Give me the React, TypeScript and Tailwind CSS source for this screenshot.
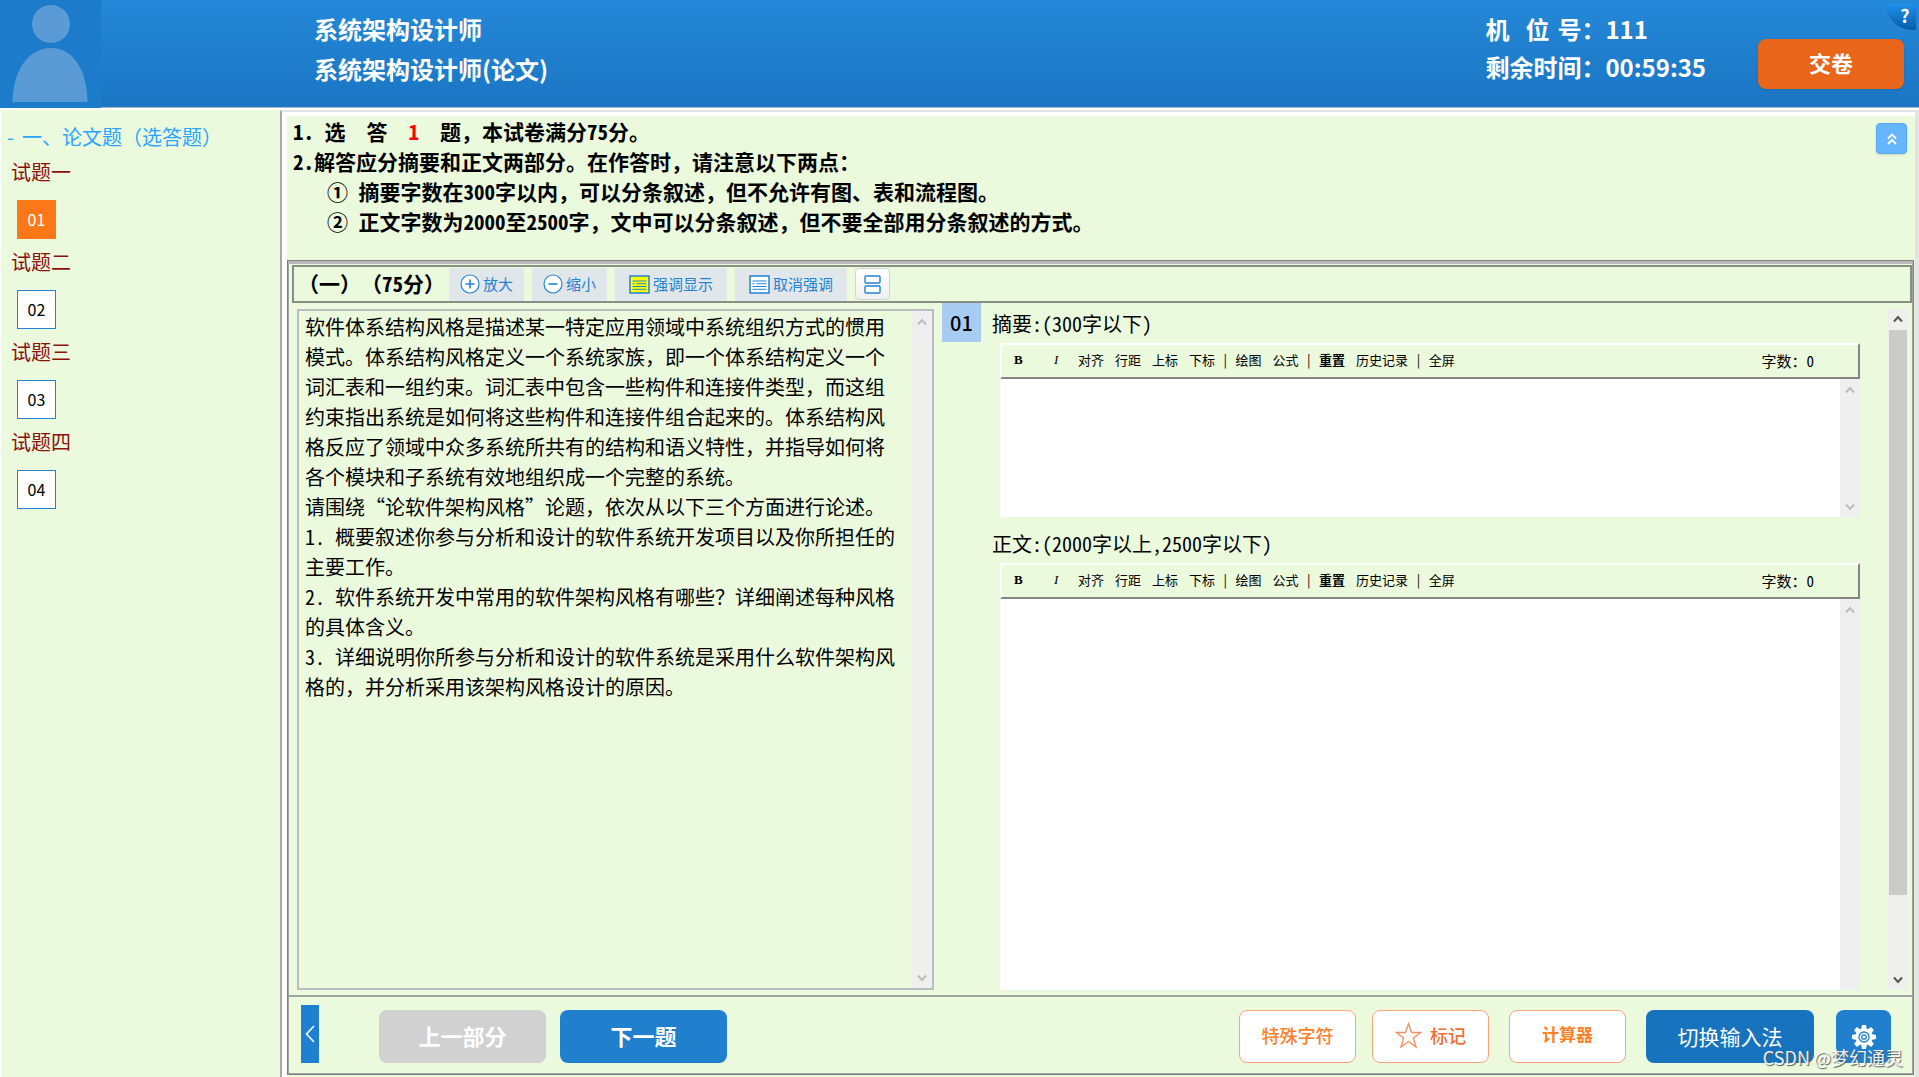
import { useState } from "react";
import type { ReactNode } from "react";

const song = "font-['Noto_Sans_Mono_CJK_SC','Noto_Sans_CJK_SC',sans-serif]";

const questions = [
	{ id: "01", title: "试题一" },
	{ id: "02", title: "试题二" },
	{ id: "03", title: "试题三" },
	{ id: "04", title: "试题四" },
];

const paragraphs = [
	"软件体系结构风格是描述某一特定应用领域中系统组织方式的惯用模式。体系结构风格定义一个系统家族，即一个体系结构定义一个词汇表和一组约束。词汇表中包含一些构件和连接件类型，而这组约束指出系统是如何将这些构件和连接件组合起来的。体系结构风格反应了领域中众多系统所共有的结构和语义特性，并指导如何将各个模块和子系统有效地组织成一个完整的系统。",
	"请围绕“论软件架构风格”论题，依次从以下三个方面进行论述。",
	"1. 概要叙述你参与分析和设计的软件系统开发项目以及你所担任的主要工作。",
	"2. 软件系统开发中常用的软件架构风格有哪些？详细阐述每种风格的具体含义。",
	"3. 详细说明你所参与分析和设计的软件系统是采用什么软件架构风格的，并分析采用该架构风格设计的原因。",
];

function Chevron({ up, className }: { up?: boolean; className?: string }) {
	return (
		<svg
			className={className}
			width="10"
			height="8"
			viewBox="0 0 10 8"
			fill="none"
			stroke="currentColor"
			strokeWidth="2">
			<path d={up ? "M1 6.5 5 2l4 4.5" : "M1 1.5 5 6l4-4.5"} />
		</svg>
	);
}

function ScrollTrack({ down }: { down?: boolean }) {
	return (
		<div className="flex w-5 shrink-0 flex-col items-center justify-between bg-[#efefef] pt-[7px] pb-[6px] text-[#bdbdbd]">
			<Chevron up />
			{down && <Chevron />}
		</div>
	);
}

function ToolButton({ icon, wide, children }: { icon: ReactNode; wide?: boolean; children: ReactNode }) {
	return (
		<button
			className={`flex h-[33px] items-center gap-[3px] bg-[#e0e6ea] text-[15px] text-[#2383d3] ${
				wide ? "px-[14px]" : "px-[11px]"
			}`}>
			{icon}
			{children}
		</button>
	);
}

function CircleIcon({ plus }: { plus?: boolean }) {
	return (
		<svg width="20" height="20" viewBox="0 0 20 20" fill="#fff" stroke="#2383d3" strokeWidth="1.2">
			<circle cx="10" cy="10" r="9" />
			<path d={plus ? "M5.5 10h9M10 5.5v9" : "M5.5 10h9"} strokeWidth="1.6" />
		</svg>
	);
}

function NoteIcon({ fill }: { fill: string }) {
	return (
		<svg width="21" height="19" viewBox="0 0 21 19" fill={fill} stroke="#2383d3" strokeWidth="1.5">
			<path d="M1 1h19v17H1z" />
			<path d="M3.500 6h14M3.500 8.700h2M7.500 8.700h10M3.500 11.500h14M3.500 14.300h14" strokeWidth="1" />
		</svg>
	);
}

function Editor({
	id,
	label,
	className,
	down,
}: {
	id: string;
	label: string;
	className: string;
	down?: boolean;
}) {
	const [text, setText] = useState("");

	return (
		<div className={`flex flex-col ${className}`}>
			<label htmlFor={id} className={`${song} -ml-2 h-[38px] shrink-0 text-[20px] leading-[38px]`}>
				{label}
			</label>
			<div
				className={`${song} flex h-9 shrink-0 items-center border-2 border-t-white border-r-[#858585] border-b-[#858585] border-l-white pl-3 text-[13px] whitespace-pre`}>
				<div className="flex items-center pb-[3px]">
					<button className="w-10 text-left font-['Liberation_Serif','Noto_Sans_CJK_SC',serif] font-bold">
						B
					</button>
					<button className="w-6 text-left font-['Liberation_Serif','Noto_Sans_CJK_SC',serif] italic">I</button>
					<div className="flex items-center gap-[11px]">
						<button>对齐</button>
						<button>行距</button>
						<button>上标</button>
						<button>下标</button>
						<span className="-mx-1">|</span>
						<button>绘图</button>
						<button>公式</button>
						<span className="-mx-1">|</span>
						<button className="font-bold">重置</button>
						<button>历史记录</button>
						<span className="-mx-1">|</span>
						<button>全屏</button>
					</div>
				</div>
				<span className="mr-11 ml-auto text-[15px]">字数：{text.length}</span>
			</div>
			<div className="flex min-h-0 flex-1">
				<textarea
					id={id}
					value={text}
					onChange={(e) => setText(e.target.value)}
					className="min-w-0 flex-1 resize-none bg-white p-2 text-base outline-none"
				/>
				<ScrollTrack down={down} />
			</div>
		</div>
	);
}

export default function App() {
	const [current, setCurrent] = useState("01");

	return (
		<div
			lang="zh-CN"
			className="flex h-screen flex-col overflow-hidden bg-white font-['Noto_Sans_CJK_SC',sans-serif] text-black">
			{/* Header */}
			<header className="relative flex h-[108px] shrink-0 border-b border-[#a9b7c4] bg-linear-to-b from-[#2488d8] to-[#1b76c3] font-bold text-white">
				<div className="h-[108px] w-[101px] bg-[#1c7bcb]">
					<svg width="101" height="108" viewBox="0 0 101 108" fill="#5b9bd5">
						<ellipse cx="51" cy="24" rx="19" ry="19" />
						<path d="M12.500 102C13 68 30 48 51 48s36 20 36.500 54z" />
					</svg>
				</div>
				<div className="ml-[213px] pt-[9px] text-[24px] leading-10">
					<h1>系统架构设计师</h1>
					<p>系统架构设计师(论文)</p>
				</div>
				<div className="mr-[52px] ml-auto pt-[10px] text-[24px] leading-[38px]">
					<p>
						<span className="mr-4">机</span>
						<span className="mr-2">位</span>
						号：111
					</p>
					<p>剩余时间：00:59:35</p>
				</div>
				<button className="mt-[39px] mr-[15px] h-[50px] w-[146px] rounded-lg bg-[#e8651a] pb-[3px] text-[22px] shadow">
					交卷
				</button>
				<button className="absolute top-1 right-[3px] h-[26px] w-[30px] rounded-bl-full bg-linear-to-b from-[#1e90ee] to-[#0a5ca8] pb-1 pl-2 text-[18px] leading-5">
					?
				</button>
			</header>

			<div className="flex min-h-0 flex-1 pt-[2px]">
				{/* Question list */}
				<aside className="ml-px w-[279px] shrink-0 bg-[#ebf9dd] pt-3 pl-[6px]">
					<h2 className="flex h-[30px] gap-2 text-[20px] leading-[30px] text-[#2aa5ff]">
						<span>-</span>
						一、论文题（选答题）
					</h2>
					{questions.map((q) => (
						<div key={q.id} className="h-[90px] pl-1">
							<h3 className="pt-[5px] text-[20px] leading-[30px] text-[#8b1010]">{q.title}</h3>
							<button
								onClick={() => setCurrent(q.id)}
								className={`mt-[13px] ml-[6px] h-[39px] w-[39px] border pb-[2px] text-[16px] ${
									current === q.id
										? "border-[#fa7818] bg-[#fa7818] text-white"
										: "border-[#2383d3] bg-white text-black"
								}`}>
								{q.id}
							</button>
						</div>
					))}
				</aside>

				<main className="flex min-w-0 flex-1 flex-col border-t-2 border-r-4 border-l-2 border-t-[#e4e4e4] border-r-[#e4e4e4] border-l-[#a9a9a9]">
					<div className="flex min-h-0 flex-1 flex-col border-t-4 border-l-[5px] border-white bg-[#ebf9dd] pr-px pb-[2px]">
						{/* Instructions */}
						<div
							className={`${song} flex h-36 shrink-0 justify-between pr-[7px] pl-[6px] text-[21px] leading-[30px] font-bold whitespace-pre`}>
							<div>
								<p>
									1. 选  答  <span className="text-[#ff0000]">1</span>  题，本试卷满分75分。
								</p>
								<p>2.解答应分摘要和正文两部分。在作答时，请注意以下两点：</p>
								<div className="pl-[34px]">
									<p>① 摘要字数在300字以内，可以分条叙述，但不允许有图、表和流程图。</p>
									<p>② 正文字数为2000至2500字，文中可以分条叙述，但不要全部用分条叙述的方式。</p>
								</div>
							</div>
							<button
								aria-label="收起"
								className="mt-[7px] flex h-[31px] w-[31px] items-center justify-center rounded border border-[#55a9f3] bg-[#66b6ff] text-white shadow">
								<svg width="10" height="12" viewBox="0 0 10 12" fill="none" stroke="currentColor" strokeWidth="1.8">
									<path d="m1 5.500 4-4 4 4M1 11l4-4 4 4" />
								</svg>
							</button>
						</div>

						<div className="flex min-h-0 flex-1 flex-col border-2 border-t-4 border-[#a3a3a3] border-t-[#b9b9b9] outline-1 -outline-offset-1 outline-[#808080]">
							{/* Section toolbar */}
							<div className="mt-px ml-[3px] flex h-[38px] shrink-0 items-center gap-2 border-2 border-[#8a8f84] pl-1">
								<h2 className={`${song} -mr-1 text-[21px] font-bold [text-spacing-trim:space-all]`}>
									（一）（75分）
								</h2>
								<ToolButton icon={<CircleIcon plus />}>放大</ToolButton>
								<ToolButton icon={<CircleIcon />}>缩小</ToolButton>
								<ToolButton icon={<NoteIcon fill="#ffff00" />} wide>
									强调显示
								</ToolButton>
								<ToolButton icon={<NoteIcon fill="#fff" />} wide>
									取消强调
								</ToolButton>
								<button
									aria-label="分栏"
									className="flex h-8 w-[35px] items-center justify-center rounded border border-[#cfd4da] bg-linear-to-b from-white to-[#f0f0f0]">
									<svg width="17" height="19" viewBox="0 0 17 19" fill="#fff" stroke="#2383d3" strokeWidth="1.400">
										<rect x="1" y="1" width="15" height="7" rx="1" />
										<rect x="1" y="11" width="15" height="7" rx="1" />
									</svg>
								</button>
							</div>

							<div className="flex min-h-0 flex-1">
								{/* Question text */}
								<article className="mt-[6px] mb-[5px] ml-[8px] flex w-[637px] shrink-0 border-2 border-[#b9bcc0]">
									<div className={`${song} w-[613px] shrink-0 px-[6px] pt-px text-[20px] leading-[30px]`}>
										{paragraphs.map((p) => (
											<p key={p} className="w-[597px]">
												{p}
											</p>
										))}
									</div>
									<ScrollTrack down />
								</article>

								{/* Answer area */}
								<div className="ml-2 flex h-[39px] w-[39px] shrink-0 items-center justify-center bg-[#a8cbf1] text-[20px] font-medium">
									01
								</div>
								<div className="ml-[19px] flex min-w-0 flex-1 flex-col pt-[2px] pb-[5px]">
									<Editor id="abstract" label="摘要:(300字以下)" className="h-[212px] shrink-0" down />
									<Editor
										id="body"
										label="正文:(2000字以上,2500字以下)"
										className="mt-2 min-h-0 flex-1"
									/>
								</div>
								<div className="mt-[6px] mr-1 mb-[5px] ml-7 flex w-5 shrink-0 flex-col items-center justify-between bg-[#efefef] py-[6px] text-[#555]">
									<Chevron up />
									<div className="mt-[7px] mb-[81px] w-[18px] flex-1 bg-[#cbcbcb]" />
									<Chevron />
								</div>
							</div>

							{/* Footer actions */}
							<footer className="flex h-[78px] shrink-0 items-end border-t-2 border-[#a3a3a3] pr-[21px] pb-[10px] pl-[12px]">
								<button
									aria-label="收起题目列表"
									className="flex h-[58px] w-[18px] items-center justify-center bg-[#1f7fd0] text-white">
									<svg width="10" height="18" viewBox="0 0 10 18" fill="none" stroke="currentColor" strokeWidth="1.600">
										<path d="M9 1 1.500 9 9 17" />
									</svg>
								</button>
								<button className="ml-[60px] h-[53px] w-[167px] rounded-lg bg-[#d1d1d1] pb-[3px] text-[22px] font-bold text-white">
									上一部分
								</button>
								<button className="ml-[14px] h-[53px] w-[167px] rounded-lg bg-[#2080ce] pb-[3px] text-[22px] font-bold text-white">
									下一题
								</button>
								<button className="ml-auto h-[53px] w-[117px] rounded-lg border border-[#f9a57c] bg-white pb-[2px] text-[18px] font-medium text-[#ff7f27]">
									特殊字符
								</button>
								<button className="ml-4 flex h-[53px] w-[117px] items-center justify-center gap-2 rounded-lg border border-[#f9a57c] bg-white pb-[2px] text-[18px] font-medium text-[#ee7036]">
									<svg width="27" height="27" viewBox="0 0 24 24" fill="none" stroke="#f08f60" strokeWidth="1.200">
										<path d="m12 1.500 2.700 7.800h8.100l-6.500 4.900 2.400 8L12 17.400l-6.700 4.800 2.400-8L1.200 9.300h8.100z" />
									</svg>
									标记
								</button>
								<button className="ml-5 h-[53px] w-[117px] rounded-lg border border-[#f9a57c] bg-white pb-[5px] text-[17px] font-bold text-[#ff7f27]">
									计算器
								</button>
								<button className="ml-5 h-[53px] w-[168px] rounded-lg bg-[#1873be] text-[21px] text-white">
									切换输入法
								</button>
								<button
									aria-label="设置"
									className="ml-[22px] flex h-[53px] w-[55px] items-center justify-center rounded-lg bg-[#2080ce] text-white">
									<svg width="24" height="24" viewBox="0 0 24 24">
										<g fill="currentColor">
											<circle cx="12" cy="12" r="8.500" />
											<path d="M10 0h4l1 5H9zM10 24h4l1-5H9zM0 10v4l5 1V9zM24 10v4l-5 1V9zM2.100 5l2.900-2.900L9 5 5 9zM21.900 5 19 2.100 15 5l4 4zM2.100 19 5 21.900 9 19l-4-4zM21.900 19 19 21.900 15 19l4-4z" />
										</g>
										<circle cx="12" cy="12" r="5" fill="none" stroke="#2080ce" strokeWidth="1.300" />
										<circle cx="12" cy="12" r="2.200" fill="none" stroke="#2080ce" strokeWidth="1.300" />
									</svg>
								</button>
							</footer>
						</div>
					</div>
				</main>
			</div>

			<span className="pointer-events-none absolute right-4 bottom-[6px] text-[18px] text-white/90 [text-shadow:1px_1px_1px_#555]">
				CSDN @梦幻通灵
			</span>
		</div>
	);
}
